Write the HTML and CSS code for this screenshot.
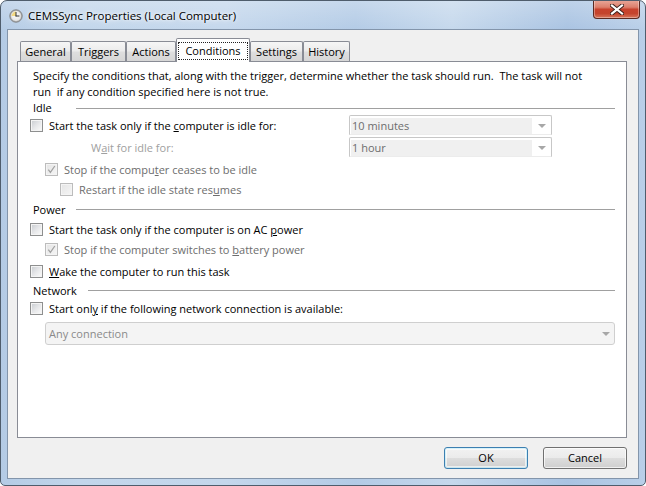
FILE: index.html
```html
<!DOCTYPE html>
<html>
<head>
<meta charset="utf-8">
<title>CEMSSync Properties (Local Computer)</title>
<link rel="stylesheet" href="styles.css">
</head>
<body>
<div class="window">
  <div class="titlebar">
    <svg class="ticon" width="14" height="14" viewBox="0 0 14 14">
      <defs>
        <radialGradient id="face" cx="0.45" cy="0.4" r="0.6">
          <stop offset="0" stop-color="#ffffff"/>
          <stop offset="1" stop-color="#e4e4e4"/>
        </radialGradient>
      </defs>
      <circle cx="7" cy="7" r="6.2" fill="#b9b9b9" stroke="#6f6f6f" stroke-width="0.8"/>
      <circle cx="7" cy="7" r="4.9" fill="url(#face)"/>
      <path d="M7 7 L7 2.6 A4.4 4.4 0 0 0 2.6 7 Z" fill="#f1cf5c" opacity="0.75"/>
      <path d="M7 7 L7 3.4 M7 7 L10 7" stroke="#333" stroke-width="1" stroke-linecap="round"/>
    </svg>
    <span class="title">CEMSSync Properties (Local Computer)</span>
    <div class="close">
      <svg width="14" height="11" viewBox="0 0 14 11">
        <path d="M2 1.5 L12 9.5 M12 1.5 L2 9.5" stroke="#3a1e1a" stroke-width="4" stroke-linecap="square"/>
        <path d="M2 1.5 L12 9.5 M12 1.5 L2 9.5" stroke="#ffffff" stroke-width="2.2" stroke-linecap="square"/>
      </svg>
    </div>
  </div>
  <div class="client">
    <div class="tabs">
      <div class="tab t-general">General</div>
      <div class="tab t-triggers">Triggers</div>
      <div class="tab t-actions">Actions</div>
      <div class="tab tab-sel"><span class="focus">Conditions</span></div>
      <div class="tab t-settings">Settings</div>
      <div class="tab t-history">History</div>
    </div>
    <div class="panel">
      <p class="intro">Specify the conditions that, along with the trigger, determine whether the task should run.&nbsp; The task will not<br>run&nbsp; if any condition specified here is not true.</p>

      <div class="group g-idle"><span class="glabel">Idle</span><span class="gline"></span></div>

      <div class="row row-combo">
        <div class="opt"><span class="cb"></span><span class="lbl">Start the task only if the <u>c</u>omputer is idle for:</span></div>
        <div class="combo"><span class="cval">10 minutes</span><span class="carrow"></span></div>
      </div>
      <div class="row row-combo mt2">
        <div class="opt"><span class="lbl dis-light wait">W<u>a</u>it for idle for:</span></div>
        <div class="combo"><span class="cval">1 hour</span><span class="carrow"></span></div>
      </div>
      <div class="row ind1 mt2">
        <span class="cb cb-dis cb-on"><svg width="9" height="9" viewBox="0 0 9 9"><path d="M1.3 4.6 L3.4 7.4 L7.8 1" fill="none" stroke="#a3a3a3" stroke-width="1.3"/></svg></span><span class="lbl dis">Stop if the compu<u>t</u>er ceases to be idle</span>
      </div>
      <div class="row ind2">
        <span class="cb cb-dis"></span><span class="lbl dis">Restart if the idle state res<u>u</u>mes</span>
      </div>

      <div class="group g-power"><span class="glabel">Power</span><span class="gline"></span></div>

      <div class="row">
        <span class="cb"></span><span class="lbl">Start the task only if the computer is on AC <u>p</u>ower</span>
      </div>
      <div class="row ind1">
        <span class="cb cb-dis cb-on"><svg width="9" height="9" viewBox="0 0 9 9"><path d="M1.3 4.6 L3.4 7.4 L7.8 1" fill="none" stroke="#a3a3a3" stroke-width="1.3"/></svg></span><span class="lbl dis">Stop if the computer switches to <u>b</u>attery power</span>
      </div>
      <div class="row mt2">
        <span class="cb"></span><span class="lbl"><u>W</u>ake the computer to run this task</span>
      </div>

      <div class="group g-network"><span class="glabel">Network</span><span class="gline"></span></div>

      <div class="row r-net">
        <span class="cb"></span><span class="lbl">Start onl<u>y</u> if the following network connection is available:</span>
      </div>
      <div class="netcombo"><span class="ncval">Any connection</span><span class="carrow"></span></div>
    </div>
    <div class="buttons">
      <div class="btn btn-default">OK</div>
      <div class="btn">Cancel</div>
    </div>
  </div>
</div>
</body>
</html>
```
FILE: styles.css
```css
html, body {
  margin: 0;
  padding: 0;
  background: #ffffff;
}
body {
  font-family: "Open Sans", "Noto Sans", sans-serif;
  font-size: 11px;
  color: #000;
}
.window {
  box-sizing: border-box;
  width: 646px;
  height: 486px;
  border: 1px solid #4f5d6c;
  border-radius: 7px 7px 5px 5px;
  background:
    linear-gradient(to bottom, rgba(255,255,255,0.25), rgba(255,255,255,0) 30px),
    linear-gradient(to right, #b4cbe5 0%, #c2d6eb 12%, #c4d7ec 35%, #b3cbe6 55%, #c5d8ec 70%, #a9c3e2 88%, #b9cfe8 100%);
  padding: 0 6px 6px 6px;
  display: flex;
  flex-direction: column;
  overflow: hidden;
}
.titlebar {
  height: 28px;
  display: flex;
  align-items: flex-start;
  flex-shrink: 0;
}
.ticon {
  margin: 8px 0 0 2px;
  flex-shrink: 0;
}
.title {
  margin: 6px 0 0 5px;
  font-size: 11.5px;
  line-height: 17px;
  color: #000;
  text-shadow: 0 0 6px #ffffff, 0 0 3px #ffffff;
  white-space: nowrap;
}
.close {
  margin-left: auto;
  margin-right: -1px;
  margin-top: -1px;
  width: 47px;
  height: 19px;
  box-sizing: border-box;
  border: 1px solid #5b2a22;
  border-top: none;
  border-radius: 0 0 4px 4px;
  background: linear-gradient(to bottom, #e9a99b 0%, #dc7f6c 40%, #c7422d 52%, #c4442d 75%, #d7765c 100%);
  box-shadow: inset 0 0 0 1px rgba(255,255,255,0.35);
  display: flex;
  align-items: center;
  justify-content: center;
}
.client {
  flex: 1;
  border: 1px solid #8395ab;
  background: #f0f0f0;
  display: flex;
  flex-direction: column;
}
.tabs {
  display: flex;
  align-items: flex-start;
  height: 23px;
  margin: 8px 0 0 12px;
}
.tab {
  box-sizing: border-box;
  height: 20px;
  margin-top: 3px;
  border: 1px solid #898c95;
  border-bottom: none;
  border-radius: 2px 2px 0 0;
  background: linear-gradient(to bottom, #f6f6f6 0%, #ececec 45%, #dedede 55%, #d6d6d6 100%);
  text-align: center;
  line-height: 19px;
  white-space: nowrap;
}
.t-general { width: 51px; }
.t-triggers { width: 55px; }
.t-actions { width: 50px; }
.t-settings { width: 53px; }
.t-history { width: 47px; }
.tab-sel {
  width: 74px;
  height: 24px;
  margin-top: 0;
  padding: 3px 1px 0 1px;
  background: #ffffff;
  position: relative;
  z-index: 1;
}
.focus {
  display: block;
  box-sizing: border-box;
  height: 18px;
  border: 1px dotted #222;
  line-height: 15px;
}
.panel {
  box-sizing: border-box;
  width: 610px;
  height: 377px;
  margin-left: 9px;
  border: 1px solid #898c95;
  background: #ffffff;
  padding: 6px 11px 0 12px;
}
.intro {
  margin: 0;
  padding-left: 3px;
  line-height: 16px;
  white-space: nowrap;
}
.group {
  display: flex;
  align-items: center;
  height: 20px;
  padding-left: 3px;
}
.g-idle { height: 15px; }
.g-network { height: 18px; }
.glabel {
  flex-shrink: 0;
  line-height: 15px;
}
.g-idle .glabel, .g-power .glabel { width: 43px; }
.g-network .glabel { width: 55px; }
.gline {
  flex: 1;
  height: 1px;
  background: #a0a0a0;
  margin-top: 1px;
}
.row {
  display: flex;
  align-items: center;
  height: 20px;
  white-space: nowrap;
}
.r-net { height: 18px; }
.mt2 { margin-top: 2px; }
.ind1 { padding-left: 15px; }
.ind2 { padding-left: 30px; }
.row-combo {
  display: grid;
  grid-template-columns: 319px 203px;
  align-items: center;
  height: 20px;
}
.opt {
  display: flex;
  align-items: center;
}
.cb {
  box-sizing: border-box;
  width: 13px;
  height: 13px;
  flex-shrink: 0;
  border: 1px solid #8e8f8f;
  background: #f4f4f4;
  padding: 1px;
  display: flex;
  align-items: center;
  justify-content: center;
}
.cb::before {
  content: "";
  display: block;
  width: 9px;
  height: 9px;
  background: linear-gradient(135deg, #cdd0d4 0%, #e6e7e9 50%, #f8f8f8 100%);
}
.cb-dis {
  border-color: #bcbcbc;
}
.cb-dis::before {
  background: linear-gradient(135deg, #e6e6e6 0%, #f4f4f4 100%);
}
.cb-on {
  position: relative;
}
.cb-on svg {
  position: absolute;
  left: 1px;
  top: 1px;
}
.lbl {
  margin-left: 6px;
  line-height: 15px;
}
.dis { color: #6d6d6d; }
.dis-light { color: #a0a0a0; }
.wait { margin-left: 61px; }
u {
  text-decoration-thickness: 1px;
  text-underline-offset: 1px;
}
.combo {
  box-sizing: border-box;
  width: 203px;
  height: 20px;
  border: 1px solid #c7c7c7;
  border-bottom-color: #ececec;
  border-radius: 2px 2px 0 0;
  background: #ffffff;
  display: flex;
  align-items: center;
  padding: 2px 0 1px 1px;
}
.cval {
  width: 181px;
  height: 16px;
  background: #f0f0f0;
  color: #6d6d6d;
  line-height: 16px;
  padding-left: 1px;
  box-sizing: border-box;
}
.carrow {
  width: 0;
  height: 0;
  border-left: 4px solid transparent;
  border-right: 4px solid transparent;
  border-top: 4px solid #a7a7a7;
  margin-left: 6px;
  margin-top: 1px;
}
.netcombo {
  box-sizing: border-box;
  width: 570px;
  height: 23px;
  margin: 5px 0 0 15px;
  border: 1px solid #cfcfcf;
  border-radius: 3px;
  background: #f4f4f4;
  display: flex;
  align-items: center;
  padding: 0 4px 0 3px;
}
.ncval {
  flex: 1;
  color: #8a8a8a;
  line-height: 16px;
}
.buttons {
  display: flex;
  justify-content: flex-end;
  gap: 15px;
  margin-top: 9px;
  padding-right: 11px;
}
.btn {
  box-sizing: border-box;
  width: 84px;
  height: 22px;
  border: 1px solid #707070;
  border-radius: 3px;
  background: linear-gradient(to bottom, #f2f2f2 0%, #ebebeb 48%, #dddddd 52%, #cfcfcf 100%);
  box-shadow: inset 0 0 0 1px rgba(255,255,255,0.7);
  text-align: center;
  line-height: 19px;
}
.btn-default {
  border-color: #3c7fb1;
  box-shadow: inset 0 0 0 1px #48d2fb33, inset 0 0 0 2px rgba(255,255,255,0.6);
}
```
